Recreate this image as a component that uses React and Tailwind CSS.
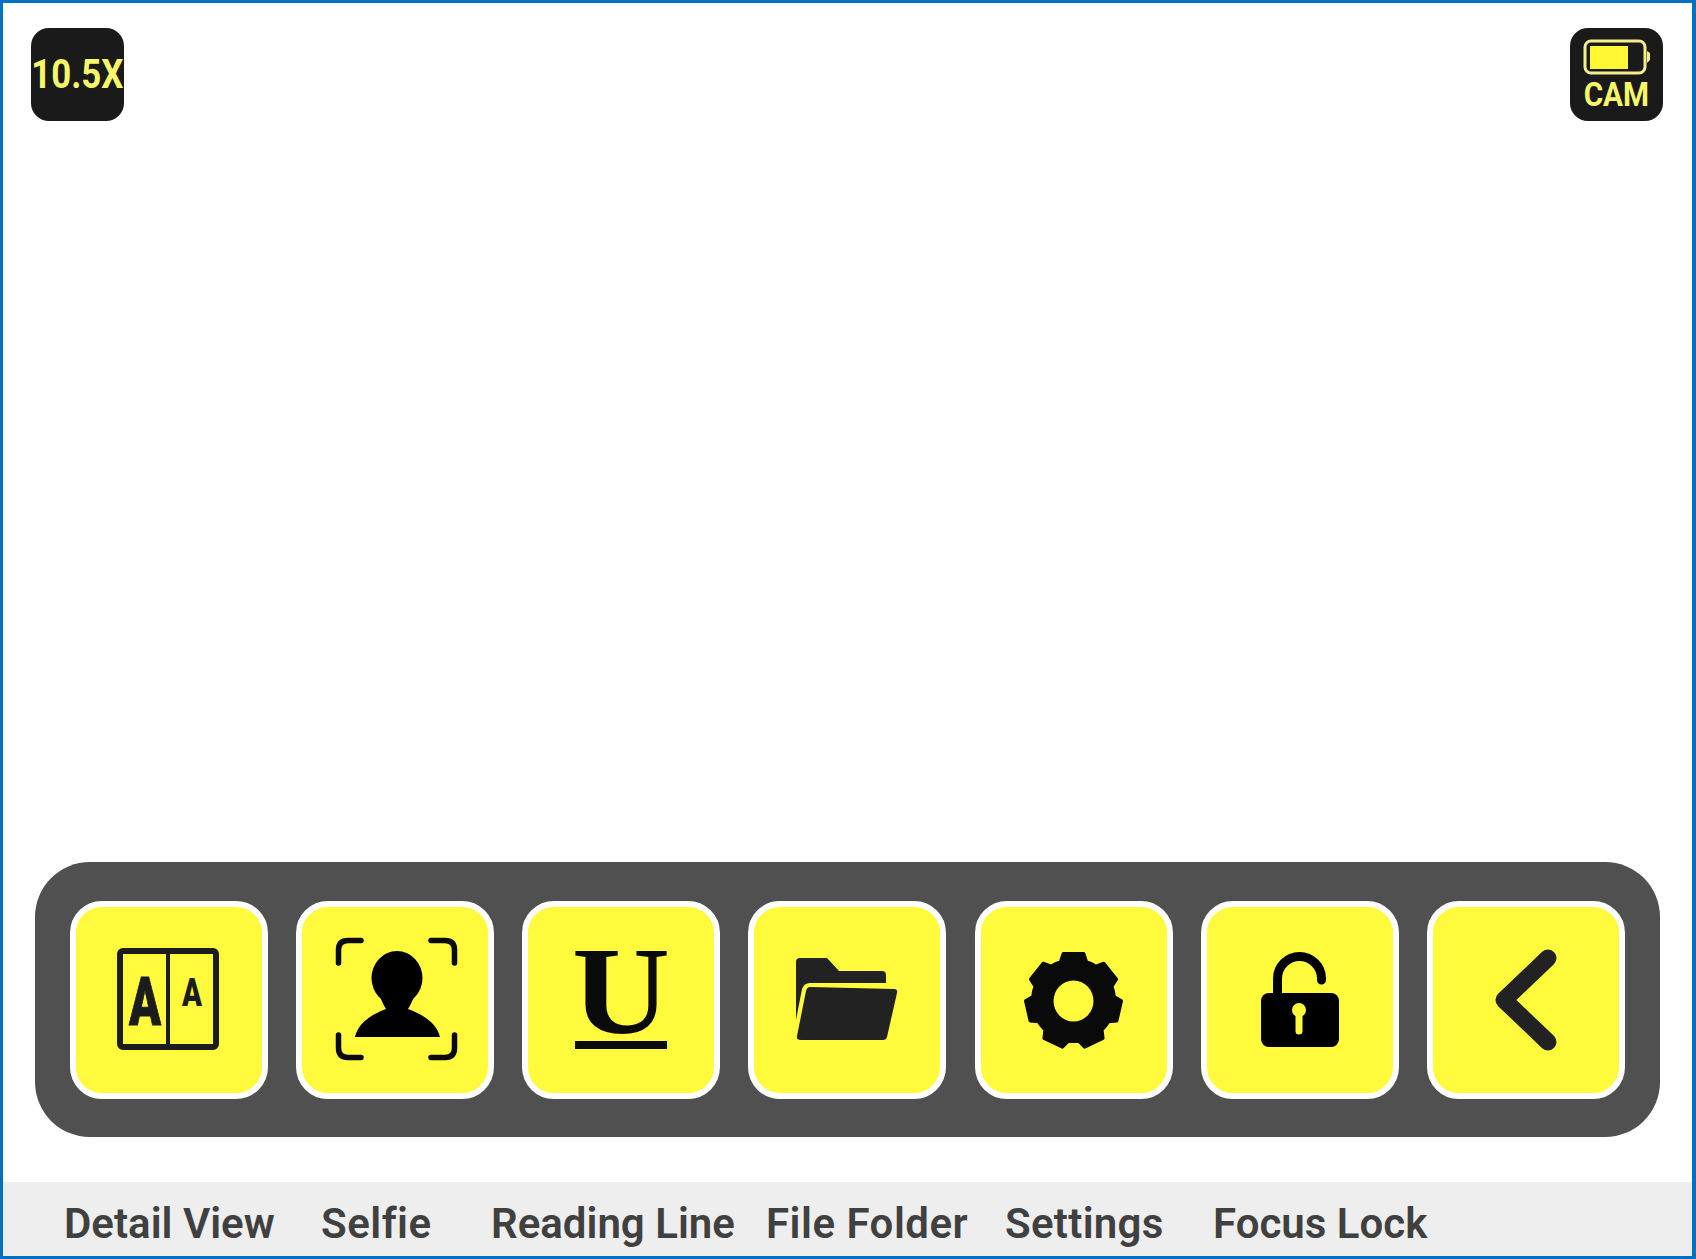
import React from "react";

const DIN = { fontFamily: '"Roboto", "Liberation Sans", sans-serif' };

function gearPath() {
  const cx = 98.5, cy = 99.5, n = 7, R = 48, r = 41;
  const pts = [];
  for (let i = 0; i < n; i++) {
    const a = (i / n) * Math.PI * 2 - Math.PI / 2;
    const step = (Math.PI * 2) / n;
    [[r, -0.5], [r, -0.36], [R, -0.24], [R, 0.24], [r, 0.36]].forEach(([rad, f]) => {
      const t = a + f * step;
      pts.push(`${(cx + rad * Math.cos(t)).toFixed(1)} ${(cy + rad * Math.sin(t)).toFixed(1)}`);
    });
  }
  return "M" + pts.join("L") + "Z";
}

const icons = [
  <g key="a">
    <rect x="50" y="50" width="96" height="96" rx="3" fill="none" stroke="#1c1c1c" strokeWidth="6" />
    <rect x="96" y="48" width="4" height="100" fill="#1c1c1c" />
    <text x="59" y="124" fontFamily="Roboto" fontWeight="900" fontSize="67" textLength="32" lengthAdjust="spacingAndGlyphs" fill="#1c1c1c" stroke="#1c1c1c" strokeWidth="1">A</text>
    <text x="112" y="105" fontFamily="Roboto" fontWeight="900" fontSize="39" textLength="20" lengthAdjust="spacingAndGlyphs" fill="#1c1c1c">A</text>
  </g>,
  <g key="b">
    <g fill="none" stroke="#0a0a0a" strokeWidth="5.500" strokeLinecap="round">
      <path d="M42.5 62 V49 Q42.5 39.5 52 39.5 H65" />
      <path d="M135 39.5 H149 Q158.500 39.500 158.500 49 V62" />
      <path d="M42.500 134 V147 Q42.500 156.500 52 156.500 H65" />
      <path d="M135 156.500 H149 Q158.500 156.500 158.500 147 V134" />
    </g>
    <ellipse cx="101" cy="77" rx="25.500" ry="27" fill="#000" />
    <path d="M59 136 C62 122 76 113 90 108 C88 105 86 100 84 96 L118 96 C116 100 114 105 112 108 C126 113 141 122 144 136 Z" fill="#000" />
  </g>,
  <g key="c">
    <text x="50" y="132" fontFamily="Liberation Serif" fontWeight="700" fontSize="125" textLength="98" lengthAdjust="spacingAndGlyphs" fill="#0a0a0a">U</text>
    <rect x="53" y="140" width="92" height="8" fill="#0a0a0a" />
  </g>,
  <g key="d" fill="#222">
    <path d="M48 61 Q48 57 52 57 L79 57 L91 70 L134 70 Q138 70 138 74 L138 82 L62 82 Q56 82 54 88 L48 119 Z" />
    <path d="M62 86 L146 88 Q150 88 149 92 L139 136 Q138 139 135 139 L53 139 Q48 139 49 135 L58 90 Q59 86 62 86 Z" />
  </g>,
  <g key="e">
    <path d={gearPath()} fill="#0a0a0a" stroke="#0a0a0a" strokeWidth="3" strokeLinejoin="round" />
    <ellipse cx="98.500" cy="100" rx="20" ry="20.500" fill="#fffb3c" />
  </g>,
  <g key="f">
    <path d="M76.500 96 V77.500 A22 22 0 0 1 120.500 77.500 V79" fill="none" stroke="#000" strokeWidth="9" strokeLinecap="round" />
    <rect x="60" y="92" width="78" height="54" rx="8" fill="#000" />
    <circle cx="98" cy="109" r="7" fill="#fffb3c" />
    <path d="M98 109 V130" stroke="#fffb3c" strokeWidth="7" strokeLinecap="round" />
  </g>,
  <path key="g" d="M121 57 L77 99 L121 141" fill="none" stroke="#222" strokeWidth="17" strokeLinecap="round" strokeLinejoin="round" />,
];

const labels = [
  { text: "Detail View", cls: "ml-[61px] w-[209px]" },
  { text: "Selfie", cls: "ml-[48px] w-[108px] tracking-[0.5px]" },
  { text: "Reading Line", cls: "ml-[62px] w-[241px]" },
  { text: "File Folder", cls: "ml-[34px] w-[200px] tracking-[0.5px]" },
  { text: "Settings", cls: "ml-[39px] w-[155px] tracking-[0.3px]" },
  { text: "Focus Lock", cls: "ml-[53px] w-[212px]" },
];

export default function App() {
  return (
    <div className="w-[1696px] h-[1259px] flex flex-col bg-white border-t-[3px] border-l-[3px] border-b-[3px] border-r-[4px] border-[#0070c0] overflow-hidden" style={DIN}>
      <div className="flex justify-between items-start pt-[25px] pl-[28px] pr-[29px]">
        <div className="w-[93px] h-[93px] rounded-[18px] bg-[#1a1a1a] flex items-center justify-center overflow-hidden">
          <span className="text-[41px] leading-none font-bold text-[#f6f76a] inline-block scale-x-[0.85] whitespace-nowrap">10.5X</span>
        </div>
        <div className="w-[93px] h-[93px] rounded-[18px] bg-[#1a1a1a] flex flex-col items-center pt-[11px]">
          <svg className="w-[68px] h-[36px] shrink-0" viewBox="0 0 68 36">
            <rect x="2" y="2" width="60" height="32" rx="6" fill="none" stroke="#f3f08a" strokeWidth="3" />
            <rect x="7" y="7" width="38" height="23" fill="#fff833" />
            <path d="M64 12 L67 14 V21 L64 24 Z" fill="#f3f08a" />
          </svg>
          <span className="mt-[4px] text-[33px] leading-[32px] font-bold text-[#f6f76a] inline-block scale-x-[0.9]">CAM</span>
        </div>
      </div>
      <div className="flex-1" />
      <div className="mx-[32px] mb-[45px] h-[275px] rounded-[55px] bg-[#505050] flex items-center justify-between pl-[35px] pr-[35px]">
        {icons.map((icon, i) => (
          <div key={i} className="w-[198px] h-[198px] rounded-[32px] border-[6px] border-white bg-[#fffb3c] shrink-0">
            <svg className="block w-full h-full" viewBox="6 6 186 186">{icon}</svg>
          </div>
        ))}
      </div>
      <div className="h-[74px] bg-[#eeeeee] flex items-center pt-[10px]">
        {labels.map((l) => (
          <div key={l.text} className={`${l.cls} shrink-0 text-[42px] leading-[48px] font-semibold text-[#404040] whitespace-nowrap`}>
            {l.text}
          </div>
        ))}
      </div>
    </div>
  );
}
